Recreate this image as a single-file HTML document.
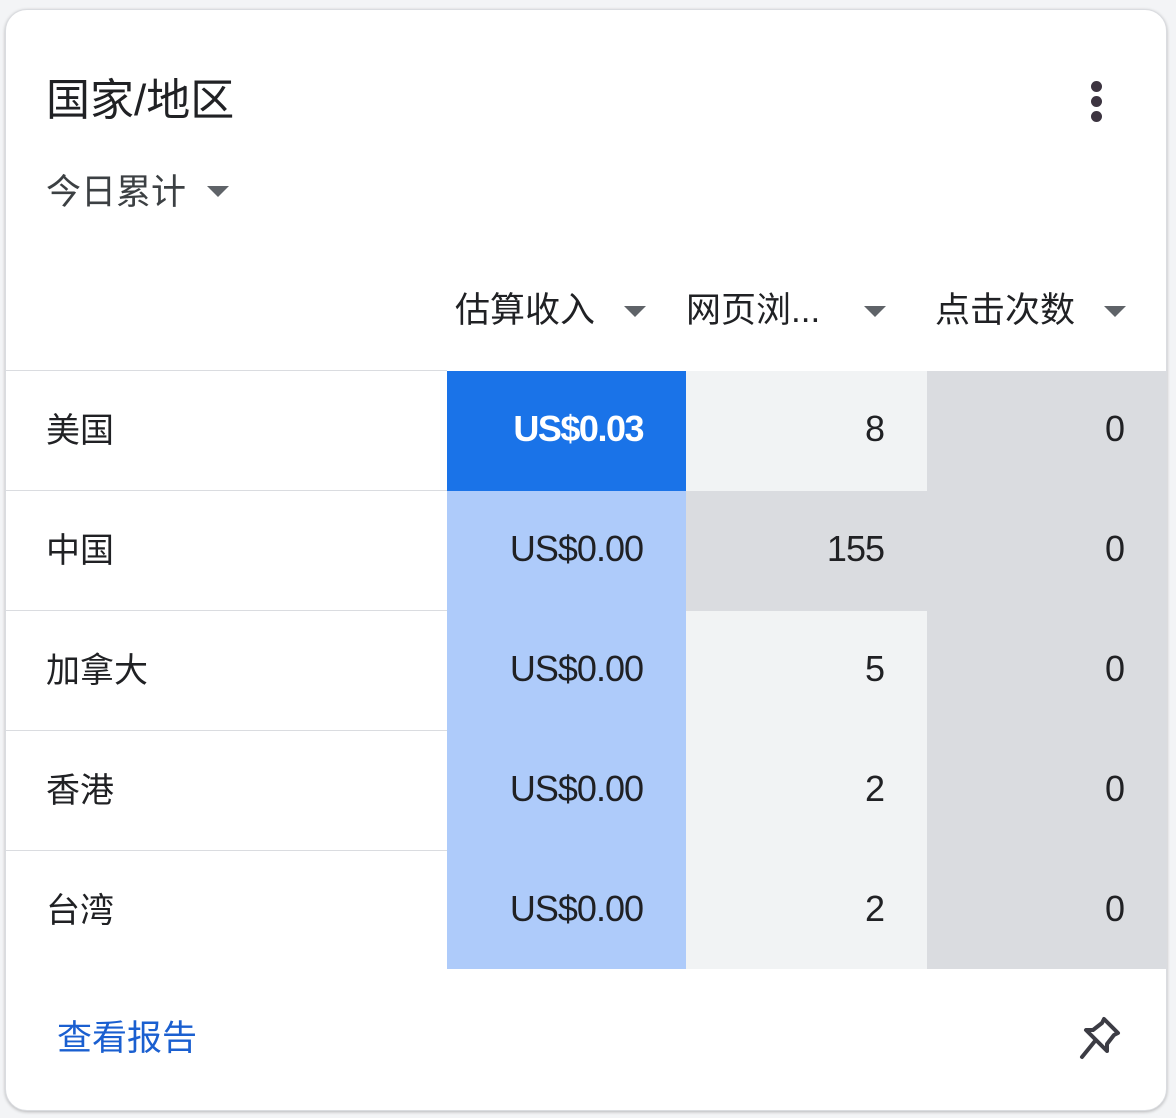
<!DOCTYPE html>
<html><head><meta charset="utf-8"><style>
*{margin:0;padding:0;box-sizing:border-box}
body{width:1176px;height:1118px;background:#f3f4f6;font-family:"Liberation Sans","Noto Sans CJK SC",sans-serif;color:#202124;position:relative;overflow:hidden}
.card{position:absolute;left:5px;top:9px;width:1162px;height:1102px;background:#fff;border:1px solid #dadce0;border-radius:22px;box-shadow:0 1px 3px rgba(0,0,0,.25);overflow:hidden}
.abs{position:absolute}
.title{left:40px;top:68px;font-size:44px;line-height:46px;color:#202124}
.sub{left:40px;top:164px;font-size:35px;line-height:38px;color:#3c4043}
.tri{width:0;height:0;border-left:11px solid transparent;border-right:11px solid transparent;border-top:11px solid #5f6368}
.hdr{font-size:35px;line-height:38px;top:282px;color:#202124}
.cell{position:absolute;height:120px}
.num{position:absolute;font-size:36px;letter-spacing:-1px;line-height:120px;text-align:right}
.lab{position:absolute;left:40px;font-size:34px;line-height:120px}
.line{position:absolute;left:0;width:441px;height:1px;background:#dadce0}
.dot{position:absolute;width:11px;height:11px;border-radius:50%;background:#3c3440;left:1085px}
</style></head><body>
<div class="card">
<div class="abs title">国家/地区</div>
<div class="dot" style="top:71px"></div><div class="dot" style="top:86px"></div><div class="dot" style="top:101px"></div>
<div class="abs sub">今日累计</div>
<div class="abs tri" style="left:201px;top:176px"></div>
<div class="abs hdr" style="left:449px">估算收入</div>
<div class="abs tri" style="left:618px;top:296px"></div>
<div class="abs hdr" style="left:680px">网页浏...</div>
<div class="abs tri" style="left:858px;top:296px"></div>
<div class="abs hdr" style="left:929px">点击次数</div>
<div class="abs tri" style="left:1098px;top:296px"></div>

<div class="line" style="top:360px"></div>
<div class="line" style="top:480px"></div>
<div class="line" style="top:600px"></div>
<div class="line" style="top:720px"></div>
<div class="line" style="top:840px"></div>

<div class="cell" style="left:441px;top:361px;width:239px;background:#1a73e8"></div>
<div class="cell" style="left:441px;top:481px;width:239px;height:478px;background:#aecbfa"></div>
<div class="cell" style="left:680px;top:361px;width:241px;height:598px;background:#f1f3f4"></div>
<div class="cell" style="left:680px;top:481px;width:241px;background:#dadce0"></div>
<div class="cell" style="left:921px;top:361px;width:241px;height:598px;background:#dadce0"></div>

<div class="lab" style="top:361px">美国</div>
<div class="lab" style="top:481px">中国</div>
<div class="lab" style="top:601px">加拿大</div>
<div class="lab" style="top:721px">香港</div>
<div class="lab" style="top:841px">台湾</div>

<div class="num" style="right:523px;top:359px;color:#fff;font-weight:bold;letter-spacing:-1.5px">US$0.03</div>
<div class="num" style="right:523px;top:479px">US$0.00</div>
<div class="num" style="right:523px;top:599px">US$0.00</div>
<div class="num" style="right:523px;top:719px">US$0.00</div>
<div class="num" style="right:523px;top:839px">US$0.00</div>

<div class="num" style="right:282px;top:359px">8</div>
<div class="num" style="right:282px;top:479px">155</div>
<div class="num" style="right:282px;top:599px">5</div>
<div class="num" style="right:282px;top:719px">2</div>
<div class="num" style="right:282px;top:839px">2</div>

<div class="num" style="right:42px;top:359px">0</div>
<div class="num" style="right:42px;top:479px">0</div>
<div class="num" style="right:42px;top:599px">0</div>
<div class="num" style="right:42px;top:719px">0</div>
<div class="num" style="right:42px;top:839px">0</div>

<div class="abs" style="left:51px;top:1009px;font-size:35px;line-height:40px;color:#1a5fd0">查看报告</div>
<svg class="abs" style="left:1068px;top:1003px" width="50" height="50" viewBox="0 0 50 50" fill="none" stroke="#3c3c44" stroke-width="4" stroke-linejoin="round" stroke-linecap="round">
<path d="M30 6 L44 20 L40 22 L33 31 L33 38 L12 17 L19 17 L28 10 Z"/>
<path d="M21 28 L8 44"/>
</svg>
</div>
</body></html>
